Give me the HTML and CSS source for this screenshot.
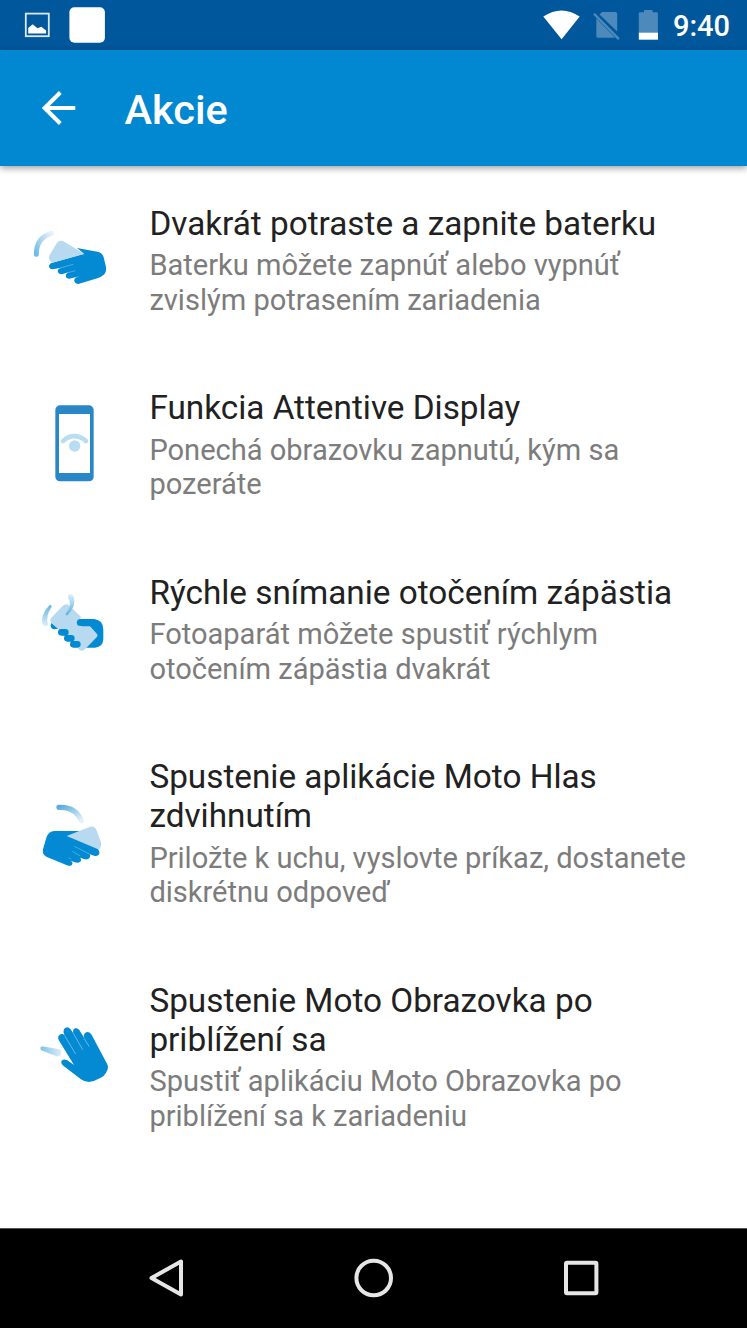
FILE: index.html
```html
<!DOCTYPE html>
<html lang="sk">
<head>
    <meta charset="UTF-8">
    <meta name="viewport" content="width=device-width, initial-scale=1.0">
    <title>Akcie</title>
    <link rel="stylesheet" href="styles.css">
</head>
<body>
    <div class="status-bar">
        <svg class="status-left" width="130" height="50" viewBox="0 0 130 50">
            <rect x="25.8" y="13.6" width="23" height="22.6" fill="none" stroke="#dbe7f1" stroke-width="1.8"/>
            <path d="M28.2 33.4V28l4.5-3.8 4.8 4 3.8-1.4 4.8 3.8v2.8z" fill="#fff"/>
            <rect x="69.4" y="7.2" width="35.5" height="35.5" rx="5" fill="#fff"/>
        </svg>
        <svg class="status-right" width="130" height="50" viewBox="0 0 130 50">
            <path d="M3.3 16.5Q21.500 4.500 39.700 16.500L21.600 39.300z" fill="#fff"/>
            <g fill="#4d89bb">
                <path d="M62 12h13.500q1.700 0 1.700 1.700V31.500L59.500 14.500z"/>
                <path d="M56.300 18.200L75.200 37.800H58.200q-1.900 0-1.900-1.900z"/>
                <path d="M53.100 14.600l1.800-1.700L79.800 38.200l-1.800 1.700z"/>
                <path d="M98.800 33V13.500q0-1.200 1.200-1.200h4V10h8.500v2.300h4.200q1.200 0 1.200 1.200V33z"/>
            </g>
            <path d="M98.800 32.700h19.200v7H98.800z" fill="#fff"/>
        </svg>
        <span class="clock">9:40</span>
    </div>

    <header class="app-bar">
        <svg class="back" width="34" height="34" viewBox="0 0 34 34">
            <path d="M33.300 17H3M18.300 1.500L2.700 17l15.600 15.500" fill="none" stroke="#fff" stroke-width="4"/>
        </svg>
        <h1>Akcie</h1>
    </header>

    <main class="list">
        <div class="item">
            <svg class="icon" viewBox="0 2 300 270">
                <defs>
                    <linearGradient id="arc1" x1="0" y1="1" x2="1" y2="0">
                        <stop offset="0" stop-color="#6fbbe3"/>
                        <stop offset="1" stop-color="#e6f3fa"/>
                    </linearGradient>
                </defs>
                <path d="M49 117Q49 67 94 54" fill="none" stroke="url(#arc1)" stroke-width="15" stroke-linecap="round"/>
                <path d="M171 98L232 109Q247 112 251 126L258 155Q260 172 249 180Q243 186 232 189L175 206Q166 207 163 198Q161 191 169 185L148 190Q139 190 137 182Q137 176 145 171L125 177Q115 177 113 168Q113 161 123 157L98 162Q88 162 87 153Q87 145 97 142L192 115z" fill="#048ad3"/>
                <path d="M120 158l40-11M144 172l22-6M168 186l8-2" fill="none" stroke="#6cbbe6" stroke-width="2"/>
                <path d="M111 82Q121 72 134 80L193 116L97 142Q82 132 89 119z" fill="#b8daf0"/>
            </svg>
            <div class="text">
                <h2>Dvakrát potraste a zapnite baterku</h2>
                <p>Baterku môžete zapnúť alebo vypnúť<br>zvislým potrasením zariadenia</p>
            </div>
        </div>

        <div class="item">
            <svg class="icon" viewBox="-60 15 300 270">
                <rect x="46" y="31" width="115" height="228" rx="14" fill="#2986c7"/>
                <path d="M57 57h93v177H57z" fill="#fff"/>
                <path d="M69 138Q103 109 138 138" fill="none" stroke="#b8dcf1" stroke-width="14" stroke-linecap="round"/>
                <circle cx="104" cy="153" r="17" fill="#b8dcf1"/>
            </svg>
            <div class="text">
                <h2>Funkcia Attentive Display</h2>
                <p>Ponechá obrazovku zapnutú, kým sa<br>pozeráte</p>
            </div>
        </div>

        <div class="item">
            <svg class="icon" viewBox="-30 -1 300 270">
                <defs>
                    <linearGradient id="arc2" x1="0" y1="0" x2="0" y2="1">
                        <stop offset="0" stop-color="#62b4df"/>
                        <stop offset="1" stop-color="#e0f0f9"/>
                    </linearGradient>
                    <linearGradient id="arc3" x1="0" y1="1" x2="0" y2="0">
                        <stop offset="0" stop-color="#5ab0dd"/>
                        <stop offset="1" stop-color="#deeff8"/>
                    </linearGradient>
                </defs>
                <path d="M151 101H190Q220 103 220 133V161Q219 185 195 187H165z" fill="#048ad3"/>
                <path d="M98 62Q107 52 117 60L154 96L142 109Q144 122 153 123H180L201 146Q205 151 200 156L165 192Q157 199 149 194L63 111Q58 103 64 97z" fill="#b8daf0"/>
                <path d="M151 111.500h38" stroke="#048ad3" stroke-width="21" stroke-linecap="round"/>
                <path d="M64 113Q60 119 63 126Q67 134 77 131L84 130z" fill="#048ad3"/>
                <path d="M94 141h12M112 159h12M130 177h12" stroke="#048ad3" stroke-width="20" stroke-linecap="round"/>
                <path d="M60 58Q37 81 36 103Q35 114 41 121Q47 126 55 118Q45 94 65 64Q66 59 60 58z" fill="url(#arc2)"/>
                <path d="M107 85Q125 65 118 44Q110 34 116 28Q124 23 131 33Q140 63 113 89Q107 93 107 85z" fill="url(#arc3)"/>
            </svg>
            <div class="text">
                <h2>Rýchle snímanie otočením zápästia</h2>
                <p>Fotoaparát môžete spustiť rýchlym<br>otočením zápästia dvakrát</p>
            </div>
        </div>

        <div class="item">
            <svg class="icon" viewBox="-30 -18 300 270">
                <defs>
                    <linearGradient id="arc4" x1="0" y1="0" x2="1" y2="1">
                        <stop offset="0" stop-color="#5aaeda"/>
                        <stop offset="1" stop-color="#e6f3fa"/>
                    </linearGradient>
                </defs>
                <path d="M87 37Q137 35 154 77" fill="none" stroke="url(#arc4)" stroke-width="16" stroke-linecap="round"/>
                <path d="M73 108H150L204 163Q211 169 208 177Q203 185 192 182L180 178Q183 185 178 190Q172 195 162 192L151 188Q156 194 151 200Q144 206 132 201L122 197Q130 202 126 209Q121 215 111 211L49 185Q36 179 39 163L49 128Q56 108 73 108z" fill="#048ad3"/>
                <path d="M133 154l47 24M127 169l24 14M116 188l8 5" fill="none" stroke="#6cbbe6" stroke-width="2"/>
                <path d="M110 123L180 95Q193 92 199 104L213 142Q216 151 208 164z" fill="#b8daf0"/>
            </svg>
            <div class="text">
                <h2>Spustenie aplikácie Moto Hlas<br>zdvihnutím</h2>
                <p>Priložte k uchu, vyslovte príkaz, dostanete<br>diskrétnu odpoveď</p>
            </div>
        </div>

        <div class="item">
            <svg class="icon" viewBox="-30 -8 300 270">
                <defs>
                    <linearGradient id="trail" x1="0" y1="0" x2="1" y2="0">
                        <stop offset="0" stop-color="#7cc2e4"/>
                        <stop offset="1" stop-color="#dceef8"/>
                    </linearGradient>
                </defs>
                <path d="M36 95L88 104Q96 109 93 119Q89 127 77 124L34 107Q27 98 36 95z" fill="url(#trail)"/>
                <path d="M132 151L86 76Q82 65 89 60Q97 55 104 62L101 54Q99 43 107 39Q115 36 121 43L130 56Q127 45 135 41Q143 39 148 46L164 72Q158 60 166 54Q176 48 184 59L231 147Q237 158 231 168Q226 184 204 193Q190 202 176 202Q164 202 153 194L100 153Q91 146 95 138Q101 132 111 136z" fill="#048ad3"/>
                <path d="M104 63l33 55M130 56l28 49M163 72l14 23" fill="none" stroke="#7cc2e8" stroke-width="2.500"/>
            </svg>
            <div class="text">
                <h2>Spustenie Moto Obrazovka po<br>priblížení sa</h2>
                <p>Spustiť aplikáciu Moto Obrazovka po<br>priblížení sa k zariadeniu</p>
            </div>
        </div>
    </main>

    <nav class="nav-bar">
        <svg width="40" height="40" viewBox="0 0 40 40"><path d="M35 3.500v33L5.500 20z"/></svg>
        <svg width="40" height="40" viewBox="0 0 40 40"><circle cx="19.700" cy="20" r="17.300"/></svg>
        <svg width="40" height="40" viewBox="0 0 40 40"><rect x="4" y="4.800" width="30.400" height="30.400" rx="1"/></svg>
    </nav>
</body>
</html>
```

FILE: styles.css
```css
* {
    box-sizing: border-box;
}
body {
    margin: 0;
    height: 1328px;
    display: flex;
    flex-direction: column;
    font-family: Roboto, sans-serif;
    background: #fff;
    overflow: hidden;
}
h1, h2, p {
    margin: 0;
    white-space: nowrap;
}
svg {
    display: block;
    flex: none;
}
.status-bar {
    display: flex;
    align-items: center;
    height: 50px;
    padding-right: 17px;
    background: #01579b;
    color: #fff;
}
.status-right {
    margin-left: auto;
}
.clock {
    width: 60px;
    padding-top: 2px;
    text-align: right;
    font-size: 29px;
    font-weight: 500;
}
.app-bar {
    display: flex;
    align-items: center;
    gap: 48.9px;
    height: 116px;
    padding-left: 41.6px;
    background: #0288d1;
    color: #fff;
    box-shadow: 0 2px 7px rgba(0,0,0,0.4);
}
.app-bar h1 {
    padding-top: 2px;
    font-size: 41.5px;
    font-weight: 500;
}
.list {
    flex: 1;
    padding-top: 1.9px;
}
.item {
    display: flex;
    align-items: center;
    padding: 35.65px 0;
}
.icon {
    width: 100px;
    height: 90px;
    margin: 1px 29.4px 0 20px;
}
.text h2 {
    font-size: 33.3px;
    font-weight: 400;
    line-height: 39px;
    color: #212121;
}
.text p {
    margin-top: 5.7px;
    font-size: 29.05px;
    line-height: 34.3px;
    color: #7c7c7c;
}
.nav-bar {
    display: flex;
    justify-content: center;
    align-items: center;
    gap: 168px;
    height: 100px;
    padding-bottom: 1px;
    background: #000;
    border-top: 1px solid #555;
}
.nav-bar svg {
    fill: none;
    stroke: #e6e6e6;
    stroke-width: 4;
    stroke-linejoin: round;
}
```
